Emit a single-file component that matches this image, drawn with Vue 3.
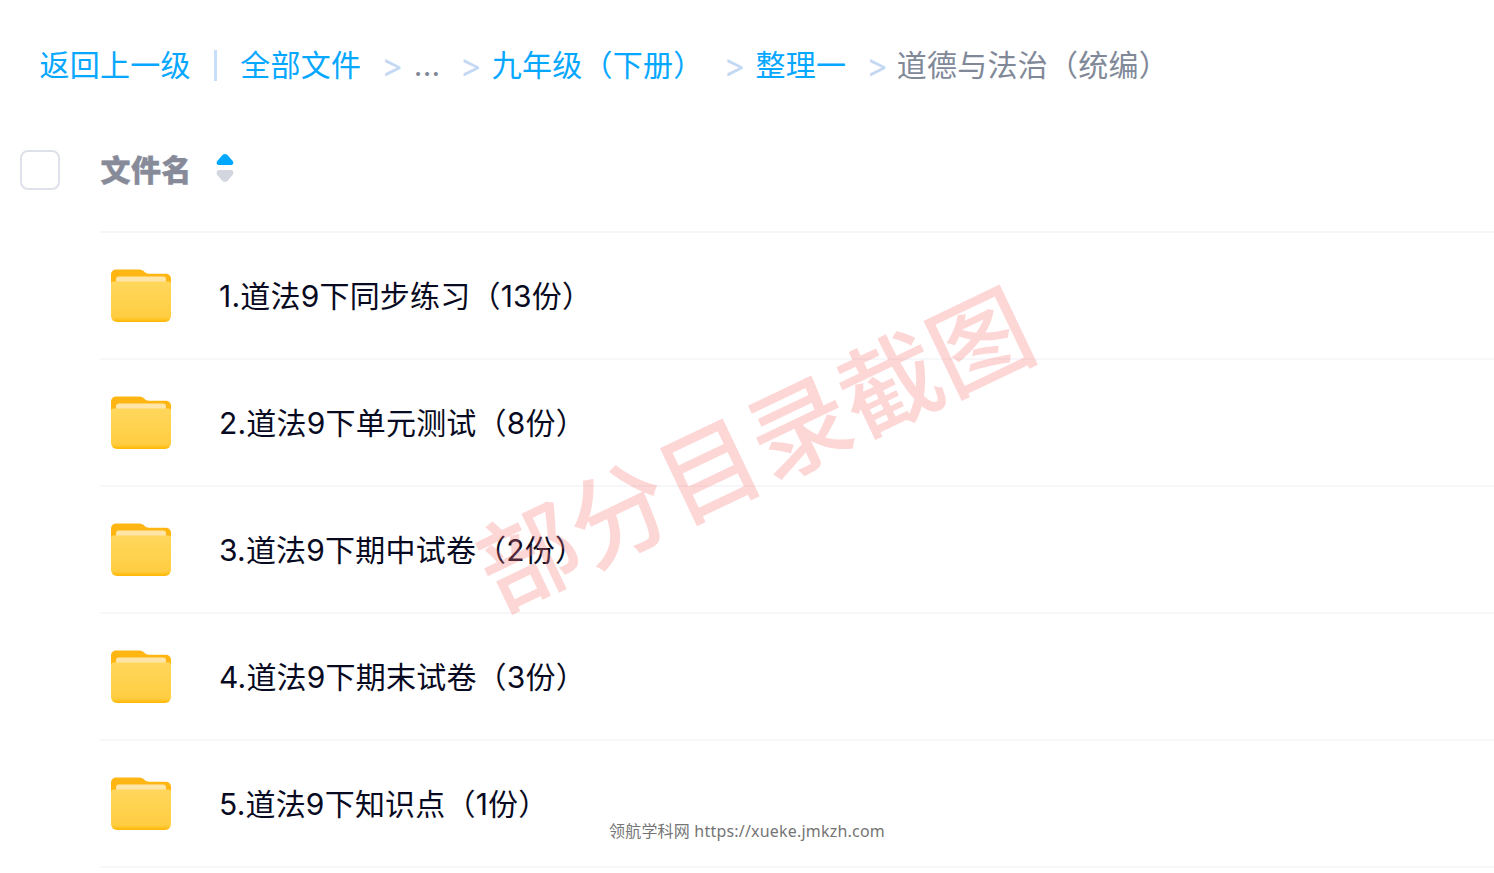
<script setup>
const rows = [
  '1.道法9下同步练习（13份）',
  '2.道法9下单元测试（8份）',
  '3.道法9下期中试卷（2份）',
  '4.道法9下期末试卷（3份）',
  '5.道法9下知识点（1份）',
]
</script>

<template>
  <div class="page">
    <nav class="crumbs">
      <span class="link">返回上一级</span>
      <span class="bar"></span>
      <span class="link">全部文件</span>
      <span class="sep">&gt;</span>
      <span class="dots">...</span>
      <span class="sep">&gt;</span>
      <span class="link">九年级（下册）</span>
      <span class="sep">&gt;</span>
      <span class="link">整理一</span>
      <span class="sep">&gt;</span>
      <span class="current">道德与法治（统编）</span>
    </nav>

    <div class="head">
      <span class="check"></span>
      <span class="title">文件名</span>
      <svg class="sort" width="18" height="30" viewBox="0 0 18 30">
        <path d="M9 1C10.500 1 11.500 1.800 12.400 2.900L16.700 8C18 9.700 17.300 12 15.200 12H2.800C.7 12 0 9.700 1.300 8L5.600 2.900C6.500 1.800 7.500 1 9 1Z" fill="#00a8ff"/>
        <path d="M9 29C10.500 29 11.500 28.200 12.400 27.100L16.700 22C18 20.300 17.300 17 15.200 17H2.800C.7 17 0 20.300 1.300 22L5.600 27.100C6.500 28.200 7.500 29 9 29Z" fill="#d3d6de"/>
      </svg>
    </div>

    <ul class="list">
      <li v-for="(r, i) in rows" :key="i" class="row">
        <svg class="folder" width="60" height="54" viewBox="0 0 60 54">
          <defs>
            <linearGradient :id="'f' + i" x1="0" y1="0" x2="0" y2="1">
              <stop offset="0" stop-color="#ffd75c"/>
              <stop offset="0.88" stop-color="#ffcd42"/>
              <stop offset="1" stop-color="#ffb703"/>
            </linearGradient>
          </defs>
          <path d="M0 6.500a5 5 0 0 1 5-5h23c3 0 4 1 6 2.800 1 1 2 1.400 4 1.400h17a5 5 0 0 1 5 5V22H0z" fill="#ffb612"/>
          <rect x="5" y="8.500" width="50" height="10" rx="3" fill="#ffe6a8"/>
          <path d="M0 16c0-1.500 1-2.500 2.500-2.500h55c1.500 0 2.500 1 2.500 2.500v32a6 6 0 0 1-6 6H6a6 6 0 0 1-6-6z" :fill="'url(#f' + i + ')'"/>
        </svg>
        <span class="name">{{ r }}</span>
      </li>
    </ul>

    <div class="mark">部分目录截图</div>
    <div class="foot">领航学科网 https://xueke.jmkzh.com</div>
  </div>
</template>

<style scoped>
.page {
  position: relative;
  width: 1494px;
  height: 873px;
  overflow: hidden;
  background: #fff;
  font-family: Inter, "Noto Sans CJK SC", sans-serif;
}
.crumbs {
  display: flex;
  align-items: center;
  height: 44px;
  padding: 43px 0 0 39.500px;
  font-size: 30px;
  line-height: 44px;
  letter-spacing: 0.25px;
  white-space: nowrap;
}
.link { color: #06a7ff; }
.current { color: #818999; margin-left: 12.500px; }
.bar {
  width: 3px;
  height: 31px;
  margin: 1px 23.500px 0 23px;
  background: #c8dffb;
}
.sep {
  color: #c4d8f4;
  width: 18px;
  margin-left: 20px;
  font-size: 33px;
  margin-top: -1px;
}
.sep + .link { margin-left: 14px; }
.dots { color: #818999; margin-left: 14.500px; width: 26px; }
.head {
  display: flex;
  align-items: center;
  height: 40px;
  margin-top: 63px;
  padding-left: 20px;
  margin-bottom: 41px;
}
.check {
  box-sizing: border-box;
  width: 40px;
  height: 40px;
  border: 2px solid #dfe1ea;
  border-radius: 8px;
}
.title {
  margin-left: 40.500px;
  margin-top: -4px;
  font-size: 30px;
  font-weight: 900;
  letter-spacing: 0.5px;
  color: #878b99;
  -webkit-text-stroke: 0.4px #878b99;
}
.sort { margin-left: 24px; margin-top: -4px; }
.list {
  list-style: none;
  margin: 0 0 0 100px;
  padding: 0;
  border-top: 2px solid #f7f7f9;
}
.row {
  box-sizing: border-box;
  display: flex;
  align-items: center;
  height: 127px;
  padding-left: 11px;
  border-bottom: 2px solid #f7f7f9;
}
.folder { flex: none; margin-top: -2px; }
.name {
  margin-left: 48px;
  margin-top: -3px;
  font-size: 30px;
  letter-spacing: 0.2px;
  color: #080a22;
  white-space: nowrap;
}
.mark {
  position: absolute;
  left: 752px;
  top: 444px;
  transform: translate(-50%, -50%) rotate(-25.500deg);
  font-size: 100px;
  font-weight: 500;
  line-height: 1;
  white-space: nowrap;
  color: rgba(247, 120, 120, 0.3);
  font-family: "Noto Sans CJK SC", sans-serif;
  pointer-events: none;
}
.foot {
  position: absolute;
  left: 0;
  right: 0;
  top: 820px;
  text-align: center;
  font-size: 16px;
  line-height: 22px;
  color: #757575;
  font-family: "Noto Sans", "Noto Sans CJK SC", sans-serif;
  letter-spacing: 0.2px;
}
</style>
